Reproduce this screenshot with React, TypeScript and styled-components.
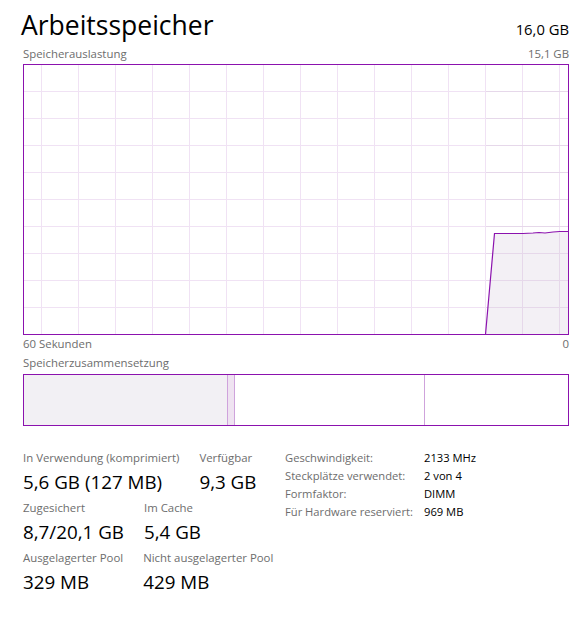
import React from "react";
import styled, { createGlobalStyle } from "styled-components";

const GlobalStyle = createGlobalStyle`
  html, body { margin: 0; padding: 0; background: #ffffff; }
  body { font-family: "Open Sans", "Noto Sans", sans-serif; color: #000; }
`;

const PURPLE = "#8b12ae";

const Page = styled.div`
  width: 583px;
  height: 624px;
  box-sizing: border-box;
  padding: 6px 14px 0 23px;
  display: flex;
  flex-direction: column;
`;

const Header = styled.div`
  display: flex;
  justify-content: space-between;
  align-items: baseline;
  height: 38px;
`;

const Title = styled.h1`
  margin: 0 0 0 -2px;
  font-weight: 400;
  font-size: 26.5px;
  line-height: 38px;
`;

const Total = styled.div`
  font-size: 14.8px;
`;

const CaptionRow = styled.div<{ $top?: number }>`
  display: flex;
  justify-content: space-between;
  font-size: 11.4px;
  line-height: 16px;
  color: #6d6d6d;
  margin-top: ${(p) => p.$top ?? 0}px;
`;

const ChartSvg = styled.svg`
  display: block;
  width: 546px;
  height: 271px;
  margin-top: 2px;
`;

const CompBar = styled.div`
  display: flex;
  width: 546px;
  height: 52px;
  margin-top: 3px;
  box-sizing: border-box;
  border: 1px solid ${PURPLE};
`;

const Segment = styled.div<{ $w: number; $bg: string; $left?: boolean; $right?: boolean }>`
  width: ${(p) => p.$w}px;
  flex: none;
  box-sizing: border-box;
  background: ${(p) => p.$bg};
  border-left: ${(p) => (p.$left ? "1px solid #cfa3dc" : "none")};
  border-right: ${(p) => (p.$right ? "1px solid #cfa3dc" : "none")};
`;

const Stats = styled.div`
  display: flex;
  margin-top: 24px;
`;

const LeftStats = styled.div`
  display: flex;
  flex-direction: column;
  gap: 3px;
  width: 262px;
`;

const StatRow = styled.div`
  display: flex;
  gap: 20px;
`;

const Stat = styled.div`
  display: flex;
  flex-direction: column;
`;

const StatLabel = styled.div`
  font-size: 11.4px;
  line-height: 16px;
  color: #6d6d6d;
  white-space: nowrap;
`;

const StatValue = styled.div`
  font-size: 18.8px;
  line-height: 30px;
  margin-top: 1px;
  white-space: nowrap;
`;

const InfoTable = styled.div`
  display: grid;
  grid-template-columns: 139px auto;
  grid-auto-rows: 18px;
  font-size: 11.2px;
  line-height: 18px;
  margin-top: -1px;
`;

const InfoLabel = styled.div`
  color: #6d6d6d;
  white-space: nowrap;
`;

const InfoValue = styled.div`
  color: #000;
  white-space: nowrap;
`;

const W = 546;
const H = 271;

function UsageChart() {
  const rows = Array.from({ length: 9 }, (_, i) => 27 * (i + 1) + 0.5);
  const cols = Array.from({ length: 15 }, (_, i) => 18 + 37 * i + 0.5);
  const line =
    "M462.5,270.5 L471.5,169.5 L500,169.5 L510,169 L516,168.5 L522,169 L530,168 L537,167.5 L545,167.5";
  const area = line + " L545,270.5 L462.5,270.5 Z";
  return (
    <ChartSvg viewBox={`0 0 ${W} ${H}`}>
      {rows.map((y) => (
        <line key={"r" + y} x1={0} x2={W} y1={y} y2={y} stroke="#f0e2f4" strokeWidth={1} />
      ))}
      {cols.map((x) => (
        <line key={"c" + x} x1={x} x2={x} y1={0} y2={H} stroke="#f0e2f4" strokeWidth={1} />
      ))}
      <path d={area} fill="#f3f0f5" />
      {rows.map((y) => (
        <line key={"ra" + y} x1={463} x2={W} y1={y} y2={y} stroke="#e6d8ea" strokeWidth={1} />
      ))}
      {cols
        .filter((x) => x > 463)
        .map((x) => (
          <line key={"ca" + x} x1={x} x2={x} y1={169} y2={H} stroke="#e6d8ea" strokeWidth={1} />
        ))}
      <path d={line} fill="none" stroke={PURPLE} strokeWidth={1.2} />
      <rect x={0.5} y={0.5} width={W - 1} height={H - 1} fill="none" stroke={PURPLE} strokeWidth={1} />
    </ChartSvg>
  );
}

export default function App() {
  return (
    <Page>
      <GlobalStyle />
      <Header>
        <Title>Arbeitsspeicher</Title>
        <Total>16,0 GB</Total>
      </Header>
      <CaptionRow $top={2}>
        <span>Speicherauslastung</span>
        <span>15,1 GB</span>
      </CaptionRow>
      <UsageChart />
      <CaptionRow $top={1}>
        <span>60 Sekunden</span>
        <span>0</span>
      </CaptionRow>
      <CaptionRow $top={3}>
        <span>Speicherzusammensetzung</span>
      </CaptionRow>
      <CompBar>
        <Segment $w={203} $bg="#f2f0f4" />
        <Segment $w={8} $bg="#efe3f1" $left $right />
        <Segment $w={189} $bg="#ffffff" />
        <Segment $w={144} $bg="#ffffff" $left />
      </CompBar>
      <Stats>
        <LeftStats>
          <StatRow>
            <Stat>
              <StatLabel>In Verwendung (komprimiert)</StatLabel>
              <StatValue>5,6 GB (127 MB)</StatValue>
            </Stat>
            <Stat>
              <StatLabel>Verfügbar</StatLabel>
              <StatValue>9,3 GB</StatValue>
            </Stat>
          </StatRow>
          <StatRow>
            <Stat>
              <StatLabel>Zugesichert</StatLabel>
              <StatValue>8,7/20,1 GB</StatValue>
            </Stat>
            <Stat>
              <StatLabel>Im Cache</StatLabel>
              <StatValue>5,4 GB</StatValue>
            </Stat>
          </StatRow>
          <StatRow>
            <Stat>
              <StatLabel>Ausgelagerter Pool</StatLabel>
              <StatValue>329 MB</StatValue>
            </Stat>
            <Stat>
              <StatLabel>Nicht ausgelagerter Pool</StatLabel>
              <StatValue>429 MB</StatValue>
            </Stat>
          </StatRow>
        </LeftStats>
        <InfoTable>
          <InfoLabel>Geschwindigkeit:</InfoLabel>
          <InfoValue>2133 MHz</InfoValue>
          <InfoLabel>Steckplätze verwendet:</InfoLabel>
          <InfoValue>2 von 4</InfoValue>
          <InfoLabel>Formfaktor:</InfoLabel>
          <InfoValue>DIMM</InfoValue>
          <InfoLabel>Für Hardware reserviert:</InfoLabel>
          <InfoValue>969 MB</InfoValue>
        </InfoTable>
      </Stats>
    </Page>
  );
}
